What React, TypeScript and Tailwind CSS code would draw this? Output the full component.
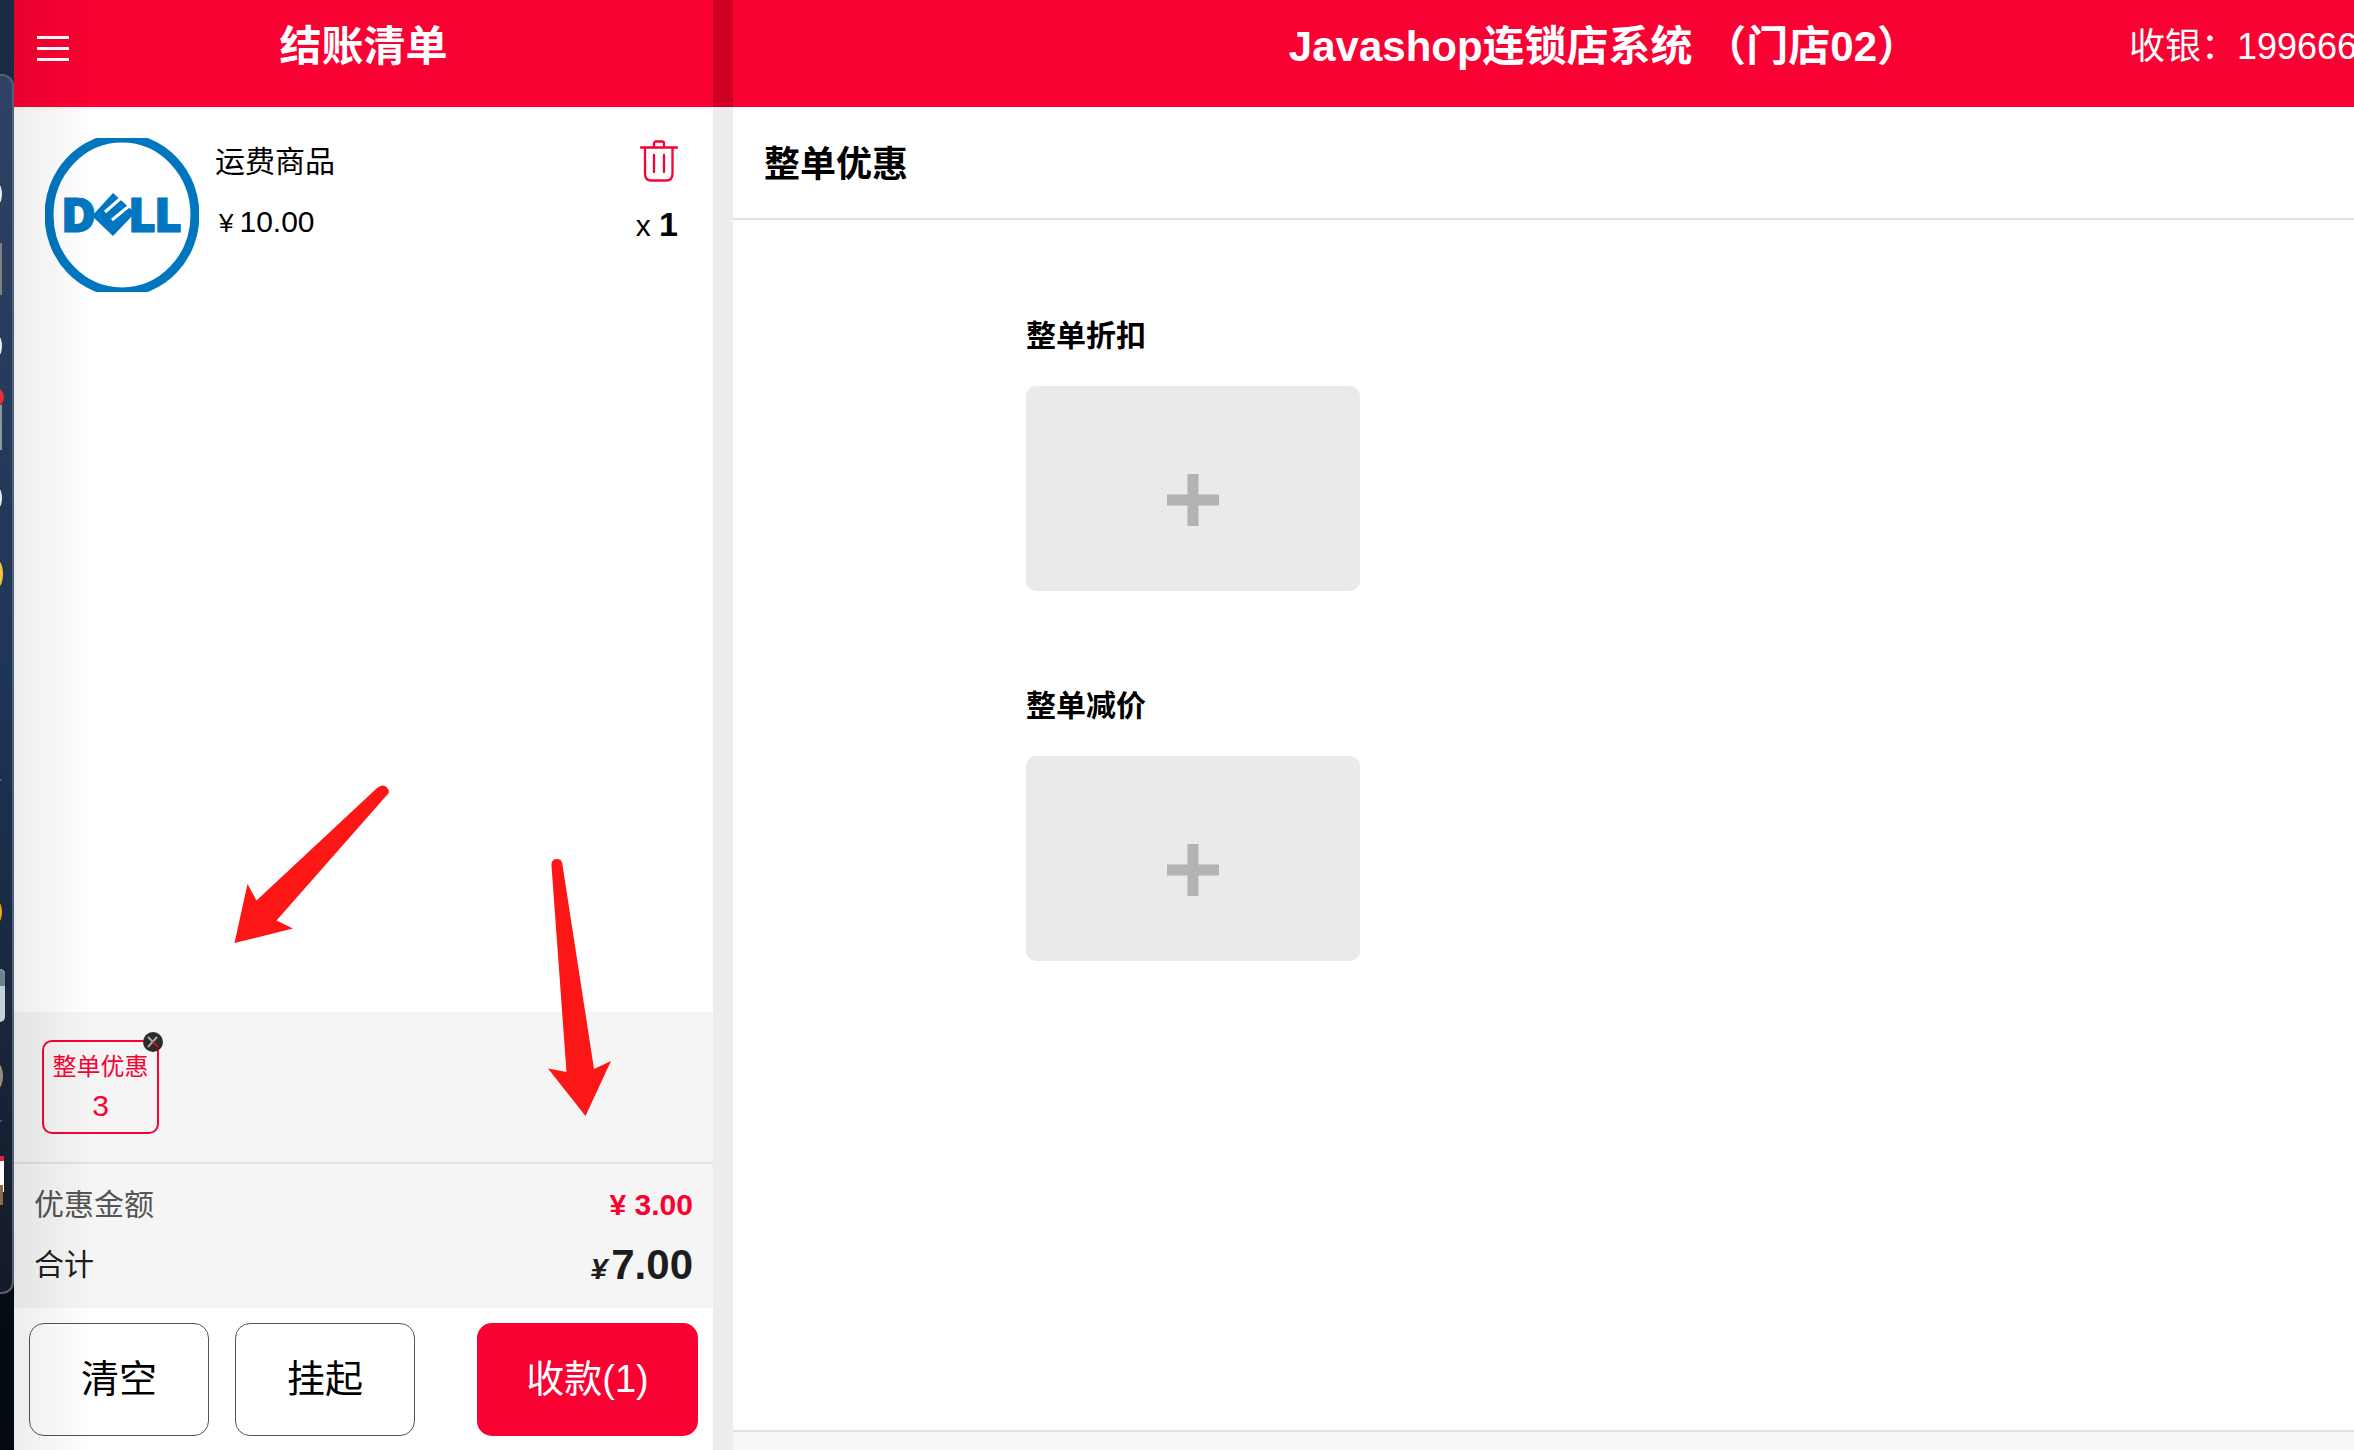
import React from 'react';

const TrashIcon: React.FC = () => (
  <svg className="w-[38px] h-[42px]" viewBox="0 0 38 42" fill="none" stroke="#f90133" strokeWidth="2.300" strokeLinecap="round">
    <path d="M1 7.5H37" />
    <path d="M14 7V3.5Q14 1.5 16 1.5H22Q24 1.5 24 3.5V7" />
    <path d="M5 8V34Q5 40.500 11.500 40.500H26Q32.500 40.500 32.500 34V8" />
    <path d="M14 15V32M24 15V32" />
  </svg>
);

const DellLogo: React.FC = () => (
  <svg className="w-[154px] h-[154px] shrink-0" viewBox="0 0 154 154">
    <ellipse cx="77" cy="77" rx="73" ry="77" fill="#fff" stroke="#0076c0" strokeWidth="9" />
    <g fill="#0076c0" stroke="#0076c0" strokeWidth="1" fontFamily="'Open Sans', sans-serif" fontWeight="800" fontSize="48">
      <text x="16" y="94">D</text>
      <text x="83" y="94">L</text>
      <text x="109" y="94">L</text>
    </g>
    <path d="M47 78L68 55L88 73L88 77L68 98Z" fill="#0076c0" />
    <path d="M76 60L60 74M84 68L67 82" stroke="#fff" strokeWidth="3" />
  </svg>
);

const Arrows: React.FC = () => (
  <svg className="absolute left-[220px] top-[780px] w-[400px] h-[340px] pointer-events-none" viewBox="220 780 400 340" fill="#fd1616">
    <path d="M234.500 943L247.500 884L256.500 900.500L376 789Q382 783 386.500 787Q391 792 387 795L276.500 920.500L293 928.500Z" />
    <path d="M585.500 1116L548 1068.500L566.500 1072L551.500 866Q551 859 557 859Q562 858.500 562.500 865L594 1069L611 1061Z" />
  </svg>
);

// slice of the desktop dock that shows beside the window
const Dock: React.FC = () => (
  <aside className="w-[14px] shrink-0 relative overflow-hidden bg-gradient-to-b from-[#1a2d45] to-[#03090f]">
    <div className="absolute left-[-20px] right-0 top-[74px] h-[1220px] rounded-[12px] border-2 border-[#52617a] bg-gradient-to-b from-[#2f4263] via-[#1d3556] via-50% to-[#151a27]" />
    <svg className="absolute left-0 top-0 w-[14px] h-[1450px]" viewBox="0 0 14 1450">
      <g fill="#e8eef0">
        <ellipse cx="-1" cy="194" rx="3" ry="9" />
        <ellipse cx="-1" cy="346" rx="3" ry="9" />
        <ellipse cx="-1" cy="498" rx="3" ry="9" />
      </g>
      <rect x="0" y="243" width="2" height="52" fill="#7d8180" />
      <rect x="0" y="405" width="2" height="45" fill="#8e9a9a" />
      <circle cx="-6" cy="397" r="10" fill="#ee2f35" />
      <ellipse cx="-2" cy="574" rx="5" ry="13" fill="#f8c33c" />
      <path d="M0 780H2M0 1121H2" stroke="#7a8494" />
      <ellipse cx="-2" cy="912" rx="4" ry="10" fill="#f9a31b" />
      <rect x="-8" y="969" width="13" height="53" rx="5" fill="#c3d1d6" />
      <path d="M0 969Q4 970 5 975V986H0Z" fill="#6b858f" />
      <ellipse cx="-3" cy="1076" rx="6" ry="13" fill="#998b7c" />
      <rect x="0" y="1156" width="4" height="36" fill="#fff" />
      <rect x="0" y="1156" width="4" height="5" fill="#e2203d" />
      <rect x="0" y="1185" width="3" height="20" fill="#8a6a4c" />
    </svg>
  </aside>
);

const CheckoutPanel: React.FC = () => (
  <section className="w-[699px] shrink-0 flex flex-col bg-white">
    <header className="h-[107px] bg-[#f90133] px-[23px] grid grid-cols-[32px_1fr_32px] items-center text-white">
      <button aria-label="菜单" className="flex flex-col gap-2 pb-[10px]">
        <span className="w-full h-[3px] bg-white" />
        <span className="w-full h-[3px] bg-white" />
        <span className="w-full h-[3px] bg-white" />
      </button>
      <h1 className="text-center text-[42px] leading-[60px] font-bold pb-[14px]">结账清单</h1>
    </header>

    <ul className="flex-1 pt-[29px] pl-[31px] pr-[35px] border-t-2 border-[#f4f4f4]">
      <li className="flex">
        <DellLogo />
        <div className="flex-1 pl-4 pt-[2px] flex flex-col">
          <p className="text-[30px] leading-[44px]">运费商品</p>
          <p className="text-[30px] leading-[40px] mt-[18px] pl-1"><span className="text-[26px]">¥</span><span className="pl-[6px]">10.00</span></p>
        </div>
        <div className="flex flex-col items-end pt-[2px]">
          <button aria-label="删除"><TrashIcon /></button>
          <p className="text-[30px] leading-[40px] mt-[22px]">x <b className="text-[34px]">1</b></p>
        </div>
      </li>
    </ul>

    <div className="h-[150px] pl-7 pt-7 bg-[#f5f5f5]">
      <div className="relative w-[117px] h-[94px] rounded-[10px] border-2 border-[#f90133] text-[#f90133] text-center pt-2">
        <p className="text-[24px] leading-[34px]">整单优惠</p>
        <p className="text-[30px] leading-[44px]">3</p>
        <button aria-label="移除" className="absolute right-[-6px] top-[-10px] size-[20px] rounded-full bg-[#2b2b2b]">
          <svg viewBox="0 0 20 20" fill="none" strokeWidth="2">
            <path d="M5 15L14 5" stroke="#aaa" />
            <path d="M5 5L10 10" stroke="#aaa" />
            <path d="M10 10L15 15" stroke="#c4102f" />
          </svg>
        </button>
      </div>
    </div>

    <dl className="h-[146px] px-[20px] pt-[10px] border-t-2 border-[#e1e1e1] bg-[#f5f5f5]">
      <div className="flex justify-between items-center h-[60px]">
        <dt className="text-[30px] text-[#555]">优惠金额</dt>
        <dd className="text-[30px] font-bold text-[#f90133]">¥ 3.00</dd>
      </div>
      <div className="flex justify-between items-center h-[60px] text-[#1d1d1d]">
        <dt className="text-[30px]">合计</dt>
        <dd className="text-[42px] font-bold"><i className="text-[30px] pr-1">¥</i>7.00</dd>
      </div>
    </dl>

    <div className="h-[142px] px-[15px] pb-[14px] pt-[15px] flex text-[38px]">
      <button className="w-[180px] rounded-[15px] border border-[#555]">清空</button>
      <button className="w-[180px] ml-[26px] rounded-[15px] border border-[#555]">挂起</button>
      <button className="w-[221px] ml-auto rounded-[15px] bg-[#f90133] text-white">收款(1)</button>
    </div>
  </section>
);

const DiscountGroup: React.FC<{ title: string }> = ({ title }) => (
  <div>
    <h3 className="text-[30px] leading-[44px] font-bold">{title}</h3>
    <button aria-label={title} className="mt-[28px] w-[334px] h-[205px] rounded-[10px] bg-[#eaeaea] flex items-center justify-center pt-[22px]">
      <svg className="size-[52px]" viewBox="0 0 52 52" stroke="#b3b3b3" strokeWidth="11">
        <path d="M26 0V52M0 26H52" />
      </svg>
    </button>
  </div>
);

export default function App() {
  const groups = ['整单折扣', '整单减价'];

  return (
    <div className="relative min-h-screen flex overflow-hidden bg-white text-black font-['Liberation_Sans','Noto_Sans_CJK_SC',sans-serif]">
      <Dock />
      <CheckoutPanel />

      <div className="w-5 shrink-0 bg-[#ededed]">
        <div className="h-[107px] bg-[#cf0021]" />
      </div>

      <main className="flex-1 min-w-0 flex flex-col">
        <header className="h-[107px] pb-[14px] bg-[#f90133] text-white flex items-center justify-end gap-[210px] overflow-hidden whitespace-nowrap">
          <h2 className="text-[42px] font-bold">Javashop连锁店系统 （门店02）</h2>
          <p className="w-[225px] text-[36px]">收银：199666</p>
        </header>
        <div className="h-[113px] px-[31px] pt-1 flex items-center border-b-2 border-[#e2e2e2]">
          <h2 className="text-[36px] font-bold">整单优惠</h2>
        </div>
        <div className="flex-1 pl-[293px] pt-[94px] flex flex-col gap-[93px]">
          {groups.map((title) => (
            <DiscountGroup key={title} title={title} />
          ))}
        </div>
        <footer className="h-[20px] border-t-2 border-[#e2e2e2] bg-[#f7f7f7]" />
      </main>

      {/* soft shadow cast by the dock */}
      <div className="absolute left-[14px] top-0 bottom-0 w-[80px] bg-gradient-to-r from-black/7 to-transparent pointer-events-none" />
      <Arrows />
    </div>
  );
}
